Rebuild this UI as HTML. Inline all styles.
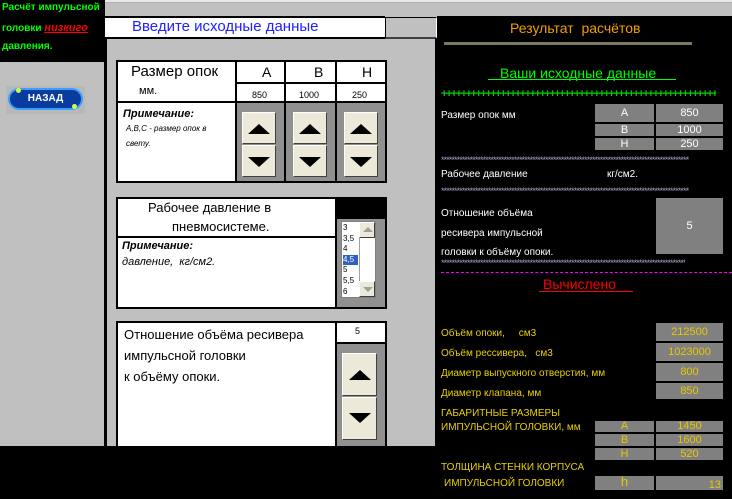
<!DOCTYPE html>
<html><head><meta charset="utf-8"><style>
*{margin:0;padding:0;box-sizing:border-box}
body{width:732px;height:499px;overflow:hidden;background:#c0c0c0;position:relative;font-family:"Liberation Sans","DejaVu Sans",sans-serif}
.a{position:absolute}
.t{position:absolute;white-space:nowrap}
.btn{position:absolute;background:#ece9d8;border:1px solid;border-color:#fff #404040 #404040 #fff}
.up,.dn{position:absolute;left:50%;width:0;height:0;border-left:11px solid transparent;border-right:11px solid transparent;transform:translateX(-50%)}
.up{border-bottom:10px solid #000;top:11px}
.dn{border-top:10px solid #000;top:11px}
.g{position:absolute;background:#808080;color:#fff;font-size:11px;text-align:center;line-height:12px}
.r .y{color:#e8c800}
.r .t{color:#fff;font-size:10px}
.r .yl{color:#e8d000 !important;font-size:10px}
.r .ast{position:absolute;overflow:hidden;white-space:nowrap;color:#a0a0c0;font-size:9px;line-height:8px;height:8px;width:248px;letter-spacing:-0.9px}
</style></head><body>
<div class="a" style="left:0;top:0;width:732px;height:3px;background:#e8e8e8;border-bottom:1px solid #b0b0b0"></div>
<div class="a" style="left:0;top:0;width:105px;height:62px;background:#000"></div>
<div class="t" style="left:2px;top:2px;color:#00ff00;font-size:10px;font-weight:bold">Расчёт импульсной</div>
<div class="t" style="left:2px;top:22px;color:#00ff00;font-size:10px;font-weight:bold">головки <span style="color:#ff0000;font-style:italic;text-decoration:underline;font-size:11px">низкиго</span></div>
<div class="t" style="left:2px;top:41px;color:#00ff00;font-size:10px;font-weight:bold">давления.</div>
<div class="a" style="left:6px;top:86px;width:79px;height:28px;background:#b8b8b8"></div>
<div class="a" style="left:8px;top:88px;width:75px;height:22px;border-radius:11px;background:#0a3ca0;border:2px solid #3aa0ff;color:#fff;font-size:10px;font-weight:bold;text-align:center;line-height:18px">НАЗАД</div>
<div class="a" style="left:16px;top:88px;width:5px;height:5px;border-radius:3px;background:#d0ff40"></div>
<div class="a" style="left:72px;top:104px;width:5px;height:5px;border-radius:3px;background:#d0ff40"></div>
<div class="a" style="left:104px;top:16px;width:3px;height:430px;background:#000"></div>
<div class="a" style="left:105px;top:16px;width:280px;height:23px;background:#fff;border-top:2px solid #000;border-bottom:2px solid #000"></div>
<div class="t" style="left:132px;top:18px;color:#2020ff;font-size:15px">Введите исходные данные</div>
<div class="a" style="left:385px;top:17px;width:52px;height:22px;background:#c0c0c0;border:1px solid #000;border-right-color:#fff;border-bottom:2px solid #404040"></div>
<div class="a" style="left:435px;top:38px;width:2px;height:408px;background:#000"></div>
<div class="a" style="left:116px;top:60px;width:271px;height:123px;background:#fff;border:2px solid #000"></div>
<div class="a" style="left:235px;top:60px;width:2px;height:123px;background:#000"></div>
<div class="a" style="left:284px;top:60px;width:2px;height:123px;background:#000"></div>
<div class="a" style="left:335px;top:60px;width:2px;height:123px;background:#000"></div>
<div class="a" style="left:235px;top:82px;width:152px;height:2px;background:#000"></div>
<div class="a" style="left:116px;top:101px;width:271px;height:2px;background:#000"></div>
<div class="a" style="left:237px;top:103px;width:47px;height:78px;background:#909090"></div>
<div class="a" style="left:286px;top:103px;width:49px;height:78px;background:#909090"></div>
<div class="a" style="left:337px;top:103px;width:48px;height:78px;background:#909090"></div>
<div class="t" style="left:131px;top:63px;font-size:15px">Размер опок</div>
<div class="t" style="left:139px;top:85px;font-size:11px">мм.</div>
<div class="t" style="left:262px;top:64px;font-size:14px">А</div>
<div class="t" style="left:314px;top:64px;font-size:14px">В</div>
<div class="t" style="left:362px;top:64px;font-size:14px">Н</div>
<div class="t" style="left:252px;top:90px;font-size:9px">850</div>
<div class="t" style="left:299px;top:90px;font-size:9px">1000</div>
<div class="t" style="left:352px;top:90px;font-size:9px">250</div>
<div class="t" style="left:123px;top:108px;font-size:11px;font-weight:bold;font-style:italic">Примечание:</div>
<div class="t" style="left:126px;top:124px;font-size:8px;font-style:italic">А,В,С - размер опок в</div>
<div class="t" style="left:126px;top:139px;font-size:8px;font-style:italic">свету.</div>
<div class="btn" style="left:242px;top:112px;width:34px;height:32px"><div class="up"></div></div>
<div class="btn" style="left:242px;top:145px;width:34px;height:32px"><div class="dn"></div></div>
<div class="btn" style="left:293px;top:112px;width:34px;height:32px"><div class="up"></div></div>
<div class="btn" style="left:293px;top:145px;width:34px;height:32px"><div class="dn"></div></div>
<div class="btn" style="left:344px;top:112px;width:34px;height:32px"><div class="up"></div></div>
<div class="btn" style="left:344px;top:145px;width:34px;height:32px"><div class="dn"></div></div>
<div class="a" style="left:116px;top:197px;width:271px;height:112px;background:#fff;border:2px solid #000"></div>
<div class="a" style="left:335px;top:197px;width:52px;height:22px;background:#000"></div>
<div class="a" style="left:335px;top:197px;width:2px;height:112px;background:#000"></div>
<div class="a" style="left:337px;top:219px;width:48px;height:88px;background:#909090"></div>
<div class="a" style="left:116px;top:236px;width:220px;height:2px;background:#000"></div>
<div class="t" style="left:148px;top:200px;font-size:13px">Рабочее давление в</div>
<div class="t" style="left:172px;top:219px;font-size:13px">пневмосистеме.</div>
<div class="t" style="left:122px;top:240px;font-size:11px;font-weight:bold;font-style:italic">Примечание:</div>
<div class="t" style="left:122px;top:256px;font-size:11px;font-style:italic">давление,&nbsp; кг/см2.</div>
<div class="a" style="left:341px;top:221px;width:35px;height:77px;background:#fff;border:1px solid #808080;font-size:8px;line-height:10.6px;padding:1px 0 0 1px">
<div>3</div><div>3,5</div><div>4</div><div style="background:#3060c0;color:#fff;width:15px">4,5</div><div>5</div><div>5,5</div><div>6</div></div>
<div class="a" style="left:359px;top:222px;width:16px;height:75px;background:#fff;border-left:1px solid #a0a0a0"></div>
<div class="btn" style="left:359px;top:222px;width:16px;height:16px"><div style="position:absolute;left:3px;top:4px;border-left:5px solid transparent;border-right:5px solid transparent;border-bottom:5px solid #a0a0a0"></div></div>
<div class="btn" style="left:359px;top:281px;width:16px;height:16px"><div style="position:absolute;left:3px;top:5px;border-left:5px solid transparent;border-right:5px solid transparent;border-top:5px solid #a0a0a0"></div></div>
<div class="a" style="left:116px;top:321px;width:271px;height:128px;background:#fff;border:2px solid #000;border-bottom:none"></div>
<div class="a" style="left:335px;top:321px;width:2px;height:125px;background:#000"></div>
<div class="a" style="left:335px;top:342px;width:52px;height:2px;background:#000"></div>
<div class="a" style="left:337px;top:344px;width:48px;height:102px;background:#909090"></div>
<div class="t" style="left:355px;top:326px;font-size:9px">5</div>
<div class="t" style="left:124px;top:324px;font-size:13px;line-height:21px">Отношение объёма ресивера<br>импульсной головки<br>к объёму опоки.</div>
<div class="btn" style="left:342px;top:353px;width:35px;height:43px"><div class="up" style="top:16px"></div></div>
<div class="btn" style="left:342px;top:397px;width:35px;height:43px"><div class="dn" style="top:15px"></div></div>
<div class="a" style="left:0;top:446px;width:732px;height:53px;background:#000"></div>
<div class="a r" style="left:437px;top:16px;width:295px;height:483px;background:#000">
<div class="t" style="left:73px;top:4px;color:#f0a000;font-size:14px">Результат&nbsp; расчётов</div>
<div class="a" style="left:7px;top:26px;width:248px;height:3px;background:#7a7a60"></div>
<div class="t" style="left:63px;top:49px;color:#00ff00;font-size:14px">Ваши исходные данные</div>
<div class="a" style="left:51px;top:63px;width:188px;height:1px;background:#00ff00"></div>
<div class="a" style="left:4px;top:74px;width:275px;height:8px;overflow:hidden;white-space:nowrap;color:#00d000;font-size:11px;font-weight:bold;line-height:8px;letter-spacing:-1.5px">++++++++++++++++++++++++++++++++++++++++++++++++++++++++++</div>
<div class="t" style="left:4px;top:94px">Размер опок мм</div>
<div class="g" style="left:158px;top:88px;width:59px;height:18px;line-height:18px">А</div>
<div class="g" style="left:219px;top:88px;width:67px;height:18px;line-height:18px">850</div>
<div class="g" style="left:158px;top:108px;width:59px;height:12px">В</div>
<div class="g" style="left:219px;top:108px;width:67px;height:12px">1000</div>
<div class="g" style="left:158px;top:122px;width:59px;height:12px">Н</div>
<div class="g" style="left:219px;top:122px;width:67px;height:12px">250</div>
<div class="ast" style="left:4px;top:140px">********************************************************************************************************************</div>
<div class="t" style="left:4px;top:153px">Рабочее давление</div>
<div class="t" style="left:170px;top:153px">кг/см2.</div>
<div class="ast" style="left:4px;top:171px">********************************************************************************************************************</div>
<div class="t" style="left:4px;top:188px;line-height:19.5px">Отношение объёма<br>ресивера импульсной<br>головки к объёму опоки.</div>
<div class="g" style="left:219px;top:182px;width:67px;height:56px;line-height:56px">5</div>
<div class="ast" style="left:4px;top:243px;width:244px">********************************************************************************************************************</div>
<div class="a" style="left:4px;top:256px;width:291px;height:0;border-top:1px dashed #ff00ff"></div>
<div class="t" style="left:106px;top:260px;color:#ff0000;font-size:14px">Вычислено</div>
<div class="a" style="left:102px;top:275px;width:94px;height:1px;background:#ff0000"></div>
<div class="t yl" style="left:4px;top:312px">Объём опоки,&nbsp;&nbsp;&nbsp;&nbsp; см3</div>
<div class="t yl" style="left:4px;top:332px">Объём рессивера,&nbsp;&nbsp; см3</div>
<div class="t yl" style="left:4px;top:352px">Диаметр выпускного отверстия, мм</div>
<div class="t yl" style="left:4px;top:372px">Диаметр клапана, мм</div>
<div class="g y" style="left:219px;top:307px;width:67px;height:18px;line-height:18px">212500</div>
<div class="g y" style="left:219px;top:327px;width:67px;height:18px;line-height:18px">1023000</div>
<div class="g y" style="left:219px;top:347px;width:67px;height:18px;line-height:18px">800</div>
<div class="g y" style="left:219px;top:367px;width:67px;height:16px;line-height:16px">850</div>
<div class="t yl" style="left:4px;top:391px;line-height:14px">ГАБАРИТНЫЕ РАЗМЕРЫ<br>ИМПУЛЬСНОЙ ГОЛОВКИ, мм</div>
<div class="g y" style="left:158px;top:405px;width:59px;height:11px;line-height:11px">А</div>
<div class="g y" style="left:219px;top:405px;width:67px;height:11px;line-height:11px">1450</div>
<div class="g y" style="left:158px;top:418px;width:59px;height:12px">В</div>
<div class="g y" style="left:219px;top:418px;width:67px;height:12px">1600</div>
<div class="g y" style="left:158px;top:432px;width:59px;height:12px">Н</div>
<div class="g y" style="left:219px;top:432px;width:67px;height:12px">520</div>
<div class="t yl" style="left:4px;top:446px">ТОЛЩИНА СТЕНКИ КОРПУСА</div>
<div class="t yl" style="left:7px;top:462px">ИМПУЛЬСНОЙ ГОЛОВКИ</div>
<div class="g y" style="left:158px;top:460px;width:59px;height:14px;line-height:12px;font-size:13px">h</div>
<div class="g y" style="left:219px;top:460px;width:67px;height:14px;line-height:18px;text-align:right;padding-right:2px">13</div>
</div>
</body></html>
